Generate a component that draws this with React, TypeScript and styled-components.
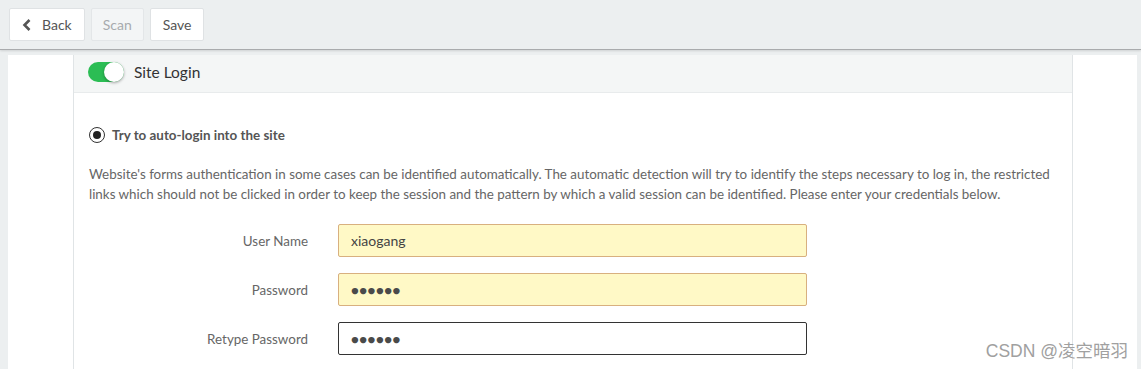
import React from 'react';
import styled, { createGlobalStyle } from 'styled-components';

const GlobalStyle = createGlobalStyle`
    html, body {
        margin: 0;
        padding: 0;
        background: #eceff0;
        font-family: Lato, "Open Sans", sans-serif;
        color: #555;
    }
`;

const Page = styled.div`
    width: 1141px;
    height: 369px;
    overflow: hidden;
    position: relative;
`;

const Toolbar = styled.div`
    height: 50px;
    display: flex;
    align-items: flex-start;
    gap: 6px;
    padding: 8px 9px 0;
    box-sizing: border-box;
    background: #eceff0;
    border-bottom: 1px solid #a9abad;
    box-shadow: 0 1px 2px rgba(0, 0, 0, 0.12);
`;

const ToolButton = styled.button<{ disabled?: boolean }>`
    height: 33px;
    padding: 0 ${p => (p.disabled ? '11px' : '12px')};
    display: flex;
    align-items: center;
    gap: 10px;
    border: 1px solid ${p => (p.disabled ? '#e3e6e8' : '#dfe2e4')};
    border-radius: 2px;
    background: ${p => (p.disabled ? '#f3f5f6' : '#fff')};
    color: ${p => (p.disabled ? '#a7abae' : '#555')};
    font-family: Lato, sans-serif;
    font-size: 14px;
`;

const Body = styled.div`
    display: flex;
    margin: 5px 4px 0 8px;
    background: #fff;
    height: 320px;
`;

const Panel = styled.div`
    margin-left: 65px;
    width: 998px;
    border-left: 1px solid #e0e4e6;
    border-right: 1px solid #e0e4e6;
`;

const PanelHeader = styled.div`
    height: 37px;
    display: flex;
    align-items: center;
    gap: 10px;
    padding-left: 14px;
    background: #f4f6f6;
    border-bottom: 1px solid #e8ebec;
`;

const Switch = styled.span`
    width: 36px;
    height: 20px;
    margin-top: -3px;
    border-radius: 10px;
    background: #2bbd54;
    position: relative;
    &::after {
        content: '';
        position: absolute;
        right: 0;
        top: 0;
        width: 20px;
        height: 20px;
        border-radius: 50%;
        background: #fff;
        box-shadow: 0 1px 3px rgba(0, 0, 0, 0.35);
    }
`;

const HeaderTitle = styled.span`
    font-size: 15.5px;
    color: #333;
    margin-top: -3px;
`;

const PanelBody = styled.div`
    padding: 34px 15px 0;
`;

const RadioRow = styled.label`
    display: flex;
    align-items: center;
    gap: 7px;
    font-weight: bold;
    font-size: 13.4px;
    color: #555;
`;

const Radio = styled.span`
    width: 14px;
    height: 14px;
    border: 1px solid #333;
    border-radius: 50%;
    display: flex;
    align-items: center;
    justify-content: center;
    &::after {
        content: '';
        width: 8px;
        height: 8px;
        border-radius: 50%;
        background: #222;
    }
`;

const Description = styled.p`
    margin: 21px 0 0;
    font-size: 13.4px;
    line-height: 20px;
    color: #666;
`;

const FormGrid = styled.div`
    display: grid;
    grid-template-columns: 219px 469px;
    column-gap: 30px;
    row-gap: 16px;
    margin-top: 20px;
    align-items: center;
`;

const Label = styled.span`
    text-align: right;
    font-size: 13.4px;
    color: #666;
`;

const Input = styled.div<{ $focused?: boolean }>`
    height: 33px;
    box-sizing: border-box;
    display: flex;
    align-items: center;
    padding-left: 12px;
    font-size: 14px;
    color: #444;
    border-radius: 2px;
    border: 1px solid ${p => (p.$focused ? '#333' : '#d8b07f')};
    background: ${p => (p.$focused ? '#fff' : '#fff9c6')};
`;

const Dots = styled.span`
    font-size: 13px;
    letter-spacing: 0.5px;
    color: #4a4a4a;
`;

const Watermark = styled.div`
    position: absolute;
    right: 13px;
    bottom: 7px;
    font-family: "Liberation Sans", "Noto Sans CJK SC", sans-serif;
    font-size: 17.5px;
    color: #a0a0a0;
`;

const BackIcon = () => (
    <svg width="10" height="12" viewBox="0 0 10 12">
        <path d="M7.5 1 L2.5 6 L7.5 11" fill="none" stroke="#555" strokeWidth="2.6" />
    </svg>
);

const App: React.FC = () => {
    return (
        <Page>
            <GlobalStyle />
            <Toolbar>
                <ToolButton>
                    <BackIcon />
                    Back
                </ToolButton>
                <ToolButton disabled>Scan</ToolButton>
                <ToolButton>Save</ToolButton>
            </Toolbar>
            <Body>
                <Panel>
                    <PanelHeader>
                        <Switch />
                        <HeaderTitle>Site Login</HeaderTitle>
                    </PanelHeader>
                    <PanelBody>
                        <RadioRow>
                            <Radio />
                            Try to auto-login into the site
                        </RadioRow>
                        <Description>
                            Website's forms authentication in some cases can be identified automatically. The automatic detection will try to identify the steps necessary to log in, the restricted links which should not be clicked in order to keep the session and the pattern by which a valid session can be identified. Please enter your credentials below.
                        </Description>
                        <FormGrid>
                            <Label>User Name</Label>
                            <Input>xiaogang</Input>
                            <Label>Password</Label>
                            <Input><Dots>●●●●●●</Dots></Input>
                            <Label>Retype Password</Label>
                            <Input $focused><Dots>●●●●●●</Dots></Input>
                        </FormGrid>
                    </PanelBody>
                </Panel>
            </Body>
            <Watermark>CSDN @凌空暗羽</Watermark>
        </Page>
    );
};

export default App;
